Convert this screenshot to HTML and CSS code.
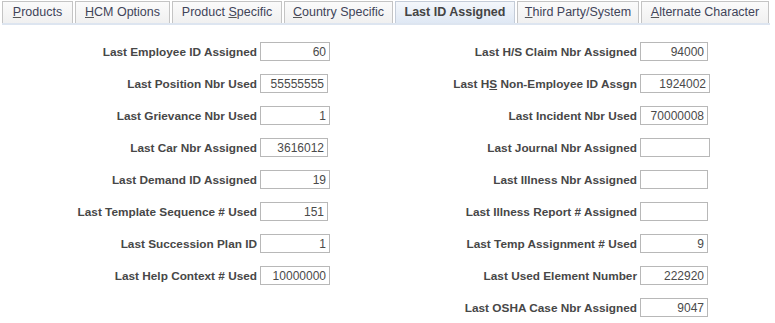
FILE: index.html
```html
<!DOCTYPE html>
<html lang="en">
<head>
  <meta charset="UTF-8" />
  <title>Installation Table - Last ID Assigned</title>
  <link rel="stylesheet" href="styles.css">
</head>
<body>
<div class="tabs">
  <a class="tab" style="width:71px"><u>P</u>roducts</a>
  <a class="tab" style="width:95px"><u>H</u>CM Options</a>
  <a class="tab" style="width:110px">Product <u>S</u>pecific</a>
  <a class="tab" style="width:109px"><u>C</u>ountry Specific</a>
  <a class="tab active" style="width:120px">Last ID Assigned</a>
  <a class="tab" style="width:122px"><u>T</u>hird Party/System</a>
  <a class="tab" style="width:128px"><u>A</u>lternate Character</a>
</div>

<div class="fields">
  <div class="col left">
    <div class="row"><label>Last Employee ID Assigned</label><input type="text" value="60" /></div>
    <div class="row"><label>Last Position Nbr Used</label><input type="text" class="narrow" value="55555555" /></div>
    <div class="row"><label>Last Grievance Nbr Used</label><input type="text" value="1" /></div>
    <div class="row"><label>Last Car Nbr Assigned</label><input type="text" class="narrow" value="3616012" /></div>
    <div class="row"><label>Last Demand ID Assigned</label><input type="text" value="19" /></div>
    <div class="row"><label>Last Template Sequence # Used</label><input type="text" class="narrow" value="151" /></div>
    <div class="row"><label>Last Succession Plan ID</label><input type="text" value="1" /></div>
    <div class="row"><label>Last Help Context # Used</label><input type="text" value="10000000" /></div>
  </div>
  <div class="col right">
    <div class="row"><label>Last H/S Claim Nbr Assigned</label><input type="text" class="narrow" value="94000" /></div>
    <div class="row"><label>Last H<u>S</u> Non-Employee ID Assgn</label><input type="text" value="1924002" /></div>
    <div class="row"><label>Last Incident Nbr Used</label><input type="text" class="narrow" value="70000008" /></div>
    <div class="row"><label>Last Journal Nbr Assigned</label><input type="text" value="" /></div>
    <div class="row"><label>Last Illness Nbr Assigned</label><input type="text" class="narrow" value="" /></div>
    <div class="row"><label>Last Illness Report # Assigned</label><input type="text" class="narrow" value="" /></div>
    <div class="row"><label>Last Temp Assignment # Used</label><input type="text" class="narrow" value="9" /></div>
    <div class="row"><label>Last Used Element Number</label><input type="text" class="narrow" value="222920" /></div>
    <div class="row"><label>Last OSHA Case Nbr Assigned</label><input type="text" class="narrow" value="9047" /></div>
  </div>
</div>
</body>
</html>
```

FILE: styles.css
```css
body {
  font-family: Arial, "Liberation Sans", sans-serif;
  font-size: 12px;
  background: #fff;
  color: #333;
  margin: 0;
  padding: 0;
}
.tabs {
  display: flex;
  gap: 2px;
  margin: 1px 5px 0 2px;
  padding: 0;
  border-bottom: 2px solid #dde5f0;
}
.tab {
  box-sizing: border-box;
  height: 22px;
  line-height: 20px;
  text-align: center;
  font-size: 12.5px;
  color: #3f4459;
  border: 1px solid #c4c4c4;
  border-bottom: none;
  background: linear-gradient(#fbfbfb, #f0f0f0);
  cursor: pointer;
}
.tab u {
  text-decoration-color: #555;
}
.tab.active {
  font-weight: bold;
  color: #444;
  background: linear-gradient(#f4f7fb, #dfe8f4);
  border-color: #c4ccd8;
}
.fields {
  display: flex;
  padding-top: 17px;
}
.col {
  display: flex;
  flex-direction: column;
  gap: 13px;
}
.col.left {
  width: 337px;
}
.col.right {
  width: 373px;
}
.row {
  display: flex;
  align-items: center;
  justify-content: flex-end;
  gap: 3px;
  height: 19px;
}
label {
  font-weight: bold;
  font-size: 11.8px;
  color: #474747;
  white-space: nowrap;
}
.left .row {
  width: 330px;
}
.right .row {
  width: 373px;
}
input {
  box-sizing: border-box;
  width: 70px;
  height: 19px;
  padding: 0 3px;
  border: 1px solid #b8b8b8;
  font-family: Arial, "Liberation Sans", sans-serif;
  font-size: 12px;
  color: #4a4a4a;
  text-align: right;
}
input.narrow {
  width: 68px;
  margin-right: 2px;
}
```
